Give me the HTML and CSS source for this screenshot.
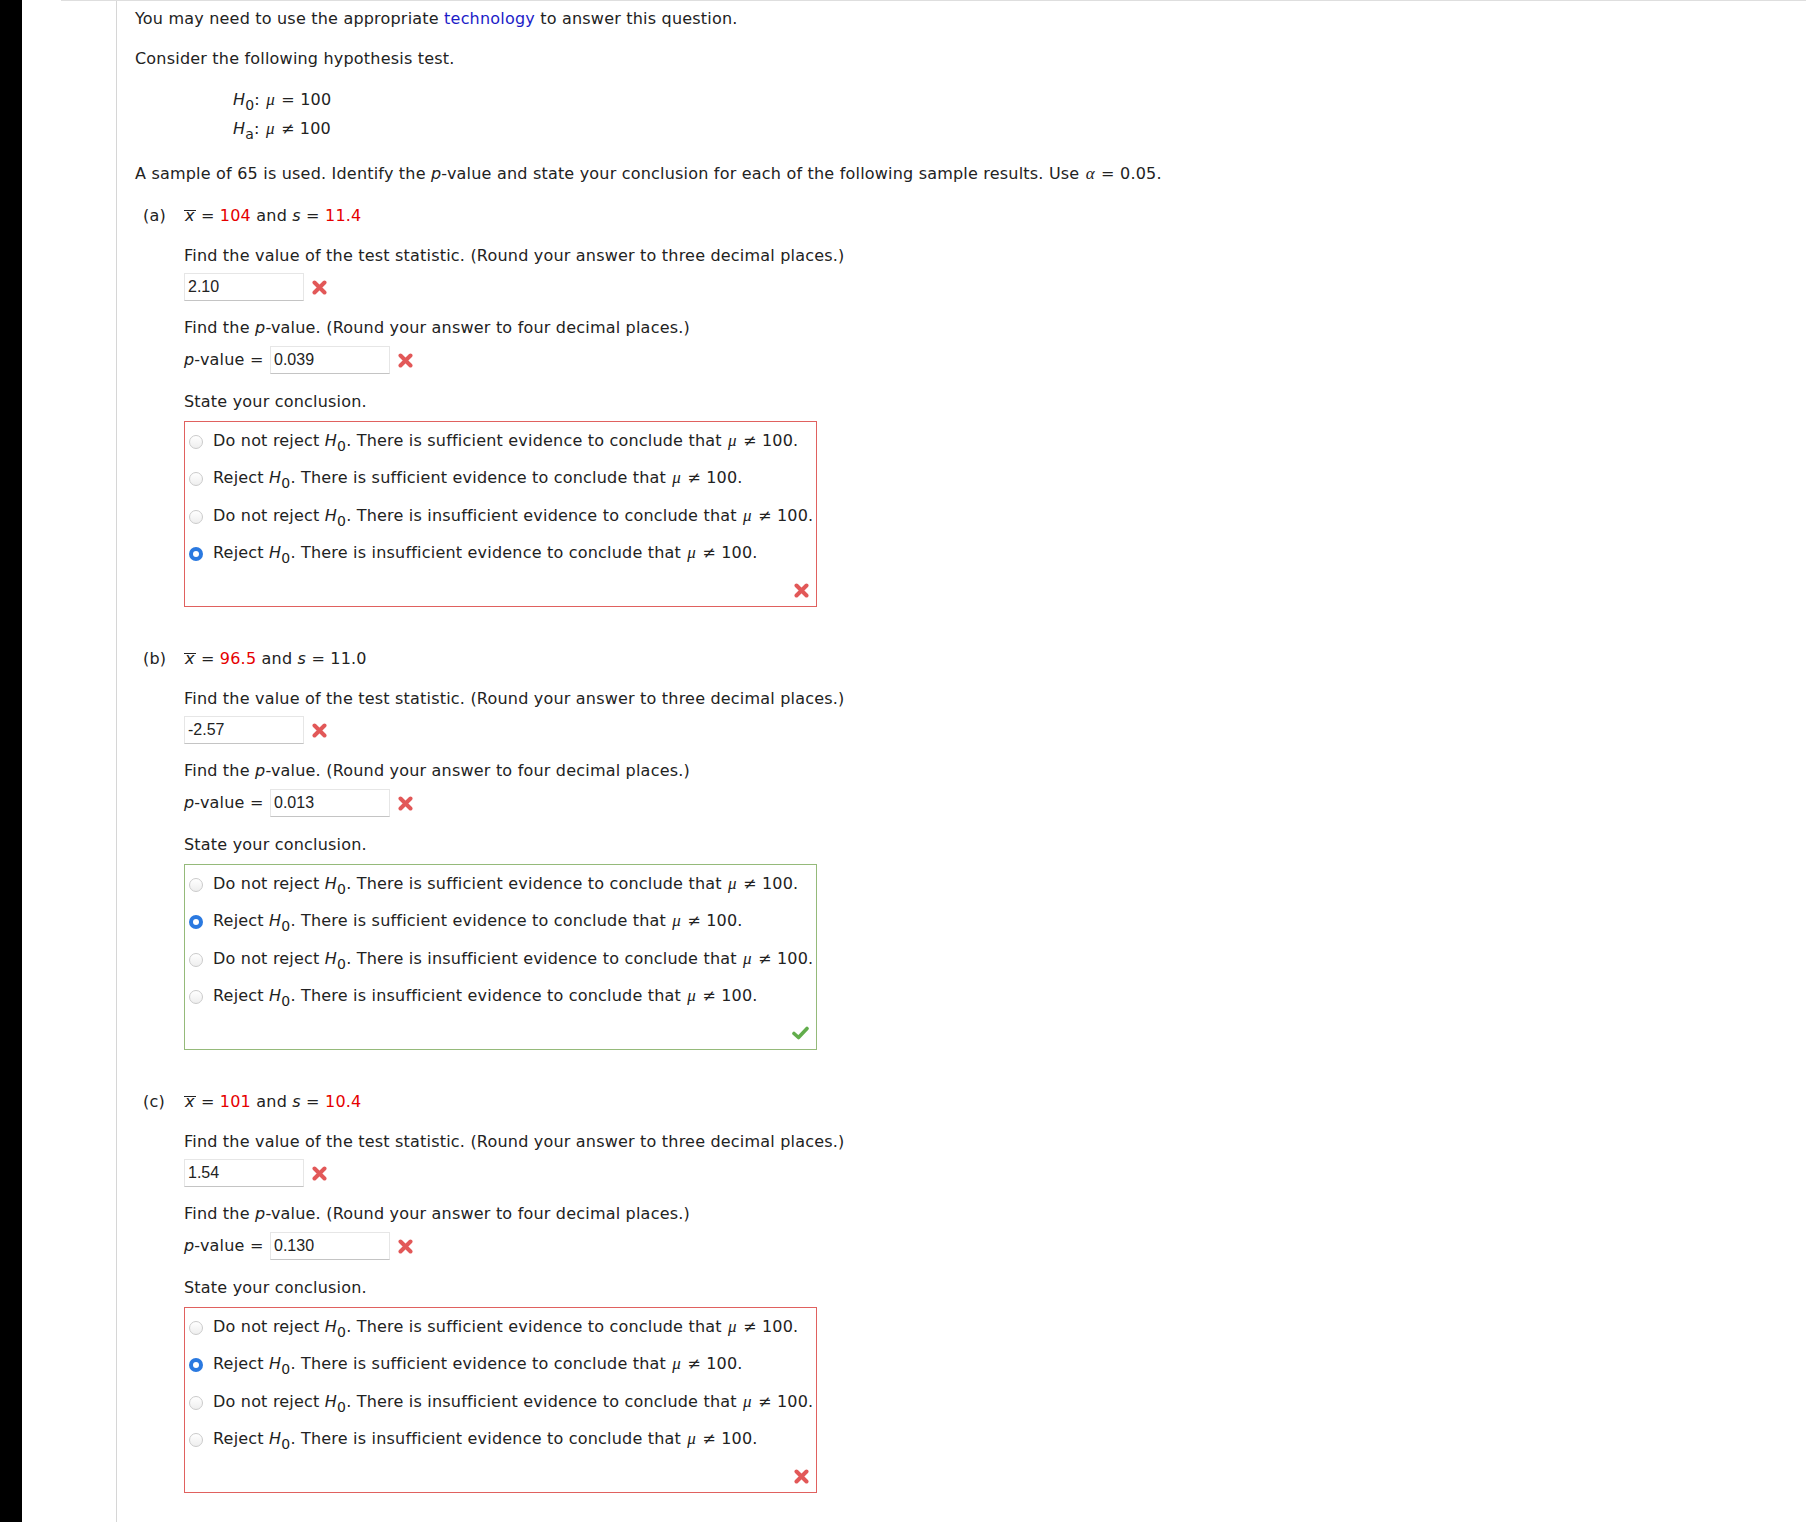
FILE: index.html
```html
<!DOCTYPE html>
<html>
<head>
<meta charset="utf-8">
<title>Hypothesis test</title>
<link rel="stylesheet" href="styles.css">
</head>
<body>
<div class="page">
  <div class="sidebar"></div>
  <div class="spacer"></div>
  <div class="frame">
    <div class="gutter"></div>
    <div class="content">
      <p class="first">You may need to use the appropriate <a class="link" href="#">technology</a> to answer this question.</p>
      <p>Consider the following hypothesis test.</p>
      <div class="hyp">
        <div class="hyp-line"><i>H</i><sub>0</sub>: <span class="gr">μ</span> = 100</div>
        <div class="hyp-line"><i>H</i><sub>a</sub>: <span class="gr">μ</span> ≠ 100</div>
      </div>
      <p class="sample">A sample of 65 is used. Identify the <i>p</i>-value and state your conclusion for each of the following sample results. Use <span class="gr">α</span> = 0.05.</p>

      <div class="part">
        <div class="part-label">(a)</div>
        <div class="part-body">
          <div class="given"><span class="xbar"><i>x</i></span> = <span class="val">104</span> and <i>s</i> = <span class="val">11.4</span></div>
          <p class="q">Find the value of the test statistic. (Round your answer to three decimal places.)</p>
          <div class="answer"><span class="field">2.10</span><svg class="icon-x" viewBox="0 0 15 15" width="15" height="15"><path d="M2.5 2.5 L12.5 12.5 M12.5 2.5 L2.5 12.5" stroke="#e25858" stroke-width="4" stroke-linecap="round"/></svg></div>
          <p class="q2">Find the <i>p</i>-value. (Round your answer to four decimal places.)</p>
          <div class="answer"><span class="plabel"><i>p</i>-value =</span><span class="field">0.039</span><svg class="icon-x" viewBox="0 0 15 15" width="15" height="15"><path d="M2.5 2.5 L12.5 12.5 M12.5 2.5 L2.5 12.5" stroke="#e25858" stroke-width="4" stroke-linecap="round"/></svg></div>
          <p class="q3">State your conclusion.</p>
          <div class="choices wrong">
            <div class="opt"><span class="radio"></span><span>Do not reject <i>H</i><sub>0</sub>. There is sufficient evidence to conclude that <span class="gr">μ</span> ≠ 100.</span></div>
            <div class="opt"><span class="radio"></span><span>Reject <i>H</i><sub>0</sub>. There is sufficient evidence to conclude that <span class="gr">μ</span> ≠ 100.</span></div>
            <div class="opt"><span class="radio"></span><span>Do not reject <i>H</i><sub>0</sub>. There is insufficient evidence to conclude that <span class="gr">μ</span> ≠ 100.</span></div>
            <div class="opt"><span class="radio on"></span><span>Reject <i>H</i><sub>0</sub>. There is insufficient evidence to conclude that <span class="gr">μ</span> ≠ 100.</span></div>
            <div class="mark"><svg class="icon-x" viewBox="0 0 15 15" width="15" height="15"><path d="M2.5 2.5 L12.5 12.5 M12.5 2.5 L2.5 12.5" stroke="#e25858" stroke-width="4" stroke-linecap="round"/></svg></div>
          </div>
        </div>
      </div>

      <div class="part">
        <div class="part-label">(b)</div>
        <div class="part-body">
          <div class="given"><span class="xbar"><i>x</i></span> = <span class="val">96.5</span> and <i>s</i> = 11.0</div>
          <p class="q">Find the value of the test statistic. (Round your answer to three decimal places.)</p>
          <div class="answer"><span class="field">-2.57</span><svg class="icon-x" viewBox="0 0 15 15" width="15" height="15"><path d="M2.5 2.5 L12.5 12.5 M12.5 2.5 L2.5 12.5" stroke="#e25858" stroke-width="4" stroke-linecap="round"/></svg></div>
          <p class="q2">Find the <i>p</i>-value. (Round your answer to four decimal places.)</p>
          <div class="answer"><span class="plabel"><i>p</i>-value =</span><span class="field">0.013</span><svg class="icon-x" viewBox="0 0 15 15" width="15" height="15"><path d="M2.5 2.5 L12.5 12.5 M12.5 2.5 L2.5 12.5" stroke="#e25858" stroke-width="4" stroke-linecap="round"/></svg></div>
          <p class="q3">State your conclusion.</p>
          <div class="choices right">
            <div class="opt"><span class="radio"></span><span>Do not reject <i>H</i><sub>0</sub>. There is sufficient evidence to conclude that <span class="gr">μ</span> ≠ 100.</span></div>
            <div class="opt"><span class="radio on"></span><span>Reject <i>H</i><sub>0</sub>. There is sufficient evidence to conclude that <span class="gr">μ</span> ≠ 100.</span></div>
            <div class="opt"><span class="radio"></span><span>Do not reject <i>H</i><sub>0</sub>. There is insufficient evidence to conclude that <span class="gr">μ</span> ≠ 100.</span></div>
            <div class="opt"><span class="radio"></span><span>Reject <i>H</i><sub>0</sub>. There is insufficient evidence to conclude that <span class="gr">μ</span> ≠ 100.</span></div>
            <div class="mark check"><svg class="icon-check" viewBox="0 0 17 14" width="17" height="14"><path d="M2 7.5 L6.5 11.5 L15 2.5" fill="none" stroke="#62ad4c" stroke-width="3.6" stroke-linecap="round" stroke-linejoin="round"/></svg></div>
          </div>
        </div>
      </div>

      <div class="part">
        <div class="part-label">(c)</div>
        <div class="part-body">
          <div class="given"><span class="xbar"><i>x</i></span> = <span class="val">101</span> and <i>s</i> = <span class="val">10.4</span></div>
          <p class="q">Find the value of the test statistic. (Round your answer to three decimal places.)</p>
          <div class="answer"><span class="field">1.54</span><svg class="icon-x" viewBox="0 0 15 15" width="15" height="15"><path d="M2.5 2.5 L12.5 12.5 M12.5 2.5 L2.5 12.5" stroke="#e25858" stroke-width="4" stroke-linecap="round"/></svg></div>
          <p class="q2">Find the <i>p</i>-value. (Round your answer to four decimal places.)</p>
          <div class="answer"><span class="plabel"><i>p</i>-value =</span><span class="field">0.130</span><svg class="icon-x" viewBox="0 0 15 15" width="15" height="15"><path d="M2.5 2.5 L12.5 12.5 M12.5 2.5 L2.5 12.5" stroke="#e25858" stroke-width="4" stroke-linecap="round"/></svg></div>
          <p class="q3">State your conclusion.</p>
          <div class="choices wrong">
            <div class="opt"><span class="radio"></span><span>Do not reject <i>H</i><sub>0</sub>. There is sufficient evidence to conclude that <span class="gr">μ</span> ≠ 100.</span></div>
            <div class="opt"><span class="radio on"></span><span>Reject <i>H</i><sub>0</sub>. There is sufficient evidence to conclude that <span class="gr">μ</span> ≠ 100.</span></div>
            <div class="opt"><span class="radio"></span><span>Do not reject <i>H</i><sub>0</sub>. There is insufficient evidence to conclude that <span class="gr">μ</span> ≠ 100.</span></div>
            <div class="opt"><span class="radio"></span><span>Reject <i>H</i><sub>0</sub>. There is insufficient evidence to conclude that <span class="gr">μ</span> ≠ 100.</span></div>
            <div class="mark"><svg class="icon-x" viewBox="0 0 15 15" width="15" height="15"><path d="M2.5 2.5 L12.5 12.5 M12.5 2.5 L2.5 12.5" stroke="#e25858" stroke-width="4" stroke-linecap="round"/></svg></div>
          </div>
        </div>
      </div>
    </div>
  </div>
</div>
</body>
</html>
```

FILE: styles.css
```css
* { box-sizing: border-box; }

html, body {
  margin: 0;
  padding: 0;
  background: #fff;
}

body {
  font-family: "DejaVu Sans", Verdana, sans-serif;
  font-size: 16px;
  line-height: 20px;
  letter-spacing: 0.2px;
  color: #222;
}

.page {
  display: flex;
  min-height: 1522px;
}

.sidebar {
  width: 22px;
  flex: none;
  background: #000;
}

.spacer {
  width: 39px;
  flex: none;
}

.frame {
  flex: 1;
  display: flex;
  border-top: 1px solid #dedede;
}

.gutter {
  width: 55px;
  flex: none;
}

.content {
  flex: 1;
  border-left: 1px solid #d6d6d6;
  padding: 8px 0 0 18px;
}

p {
  margin: 20px 0 0;
}

p.first {
  margin-top: 0;
}

.link {
  color: #1c1cc8;
  text-decoration: none;
}

i {
  font-style: italic;
}

sub {
  font-size: 14px;
  line-height: 0;
  vertical-align: -5px;
}

.gr {
  font-family: "Liberation Serif", "Times New Roman", serif;
  font-style: italic;
  font-size: 17px;
  padding: 0 1px;
}

.hyp {
  margin-top: 16px;
  padding-left: 98px;
}

.hyp-line {
  line-height: 29px;
}

p.sample {
  margin-top: 21px;
}

.part {
  display: flex;
  margin-top: 22px;
  padding-left: 8px;
}

.part + .part {
  margin-top: 42px;
}

.part-label {
  width: 41px;
  flex: none;
}

.part-body {
  flex: 1;
}

.val {
  color: #e60000;
}

.xbar {
  display: inline-block;
  line-height: 10px;
  border-top: 1px solid #222;
  padding: 0 1px;
}

p.q {
  margin-top: 20px;
}

p.q2 {
  margin-top: 17px;
}

p.q3 {
  margin-top: 18px;
}

.answer {
  display: flex;
  align-items: center;
  gap: 8px;
  margin-top: 7px;
  height: 28px;
}

p.q2 + .answer {
  margin-top: 8px;
}

.plabel {
  width: 78px;
  flex: none;
  white-space: nowrap;
}

.field {
  display: block;
  width: 120px;
  height: 28px;
  padding: 0 3px;
  border: 1px solid #e6e6e6;
  border-bottom-color: #c4c4c4;
  background: #fff;
  font-family: "Liberation Sans", Arial, sans-serif;
  font-size: 16px;
  line-height: 26px;
  letter-spacing: 0;
  color: #222;
}

.icon-x, .icon-check {
  display: block;
  flex: none;
}

.choices {
  width: 633px;
  height: 186px;
  margin-top: 9px;
  border: 1px solid;
  padding: 0 0 0 4px;
}

.choices.wrong {
  border-color: #e0615f;
}

.choices.right {
  border-color: #95ba7a;
}

.opt {
  display: flex;
  align-items: center;
  gap: 10px;
  height: 37.5px;
  white-space: nowrap;
}

.radio {
  flex: none;
  width: 14px;
  height: 14px;
  border-radius: 50%;
  border: 1px solid #cbcbcb;
  background: linear-gradient(#ffffff, #eeeeee);
  position: relative;
  top: 1px;
}

.radio.on {
  border: none;
  background: #2a79e0;
}

.radio.on::after {
  content: "";
  position: absolute;
  left: 4px;
  top: 4px;
  width: 6px;
  height: 6px;
  border-radius: 50%;
  background: #fff;
}

.mark {
  height: 34px;
  display: flex;
  justify-content: flex-end;
  align-items: flex-end;
  padding: 0 7px 8px 0;
}

.mark.check {
  padding: 0 7px 9px 0;
}
```
